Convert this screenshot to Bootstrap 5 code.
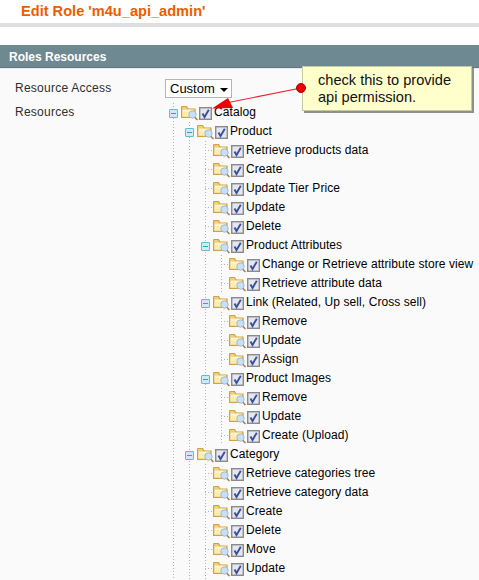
<!DOCTYPE html>
<html lang="en"><head><meta charset="utf-8"><title>Edit Role</title>
<link href="https://cdn.jsdelivr.net/npm/bootstrap@5.3.0/dist/css/bootstrap.min.css" rel="stylesheet">
<style>
html,body{height:580px;overflow:hidden}
body{font-family:"Liberation Sans",Arial,sans-serif;font-size:12px;color:#2f2f2f;background:#fff;position:relative}
.role-title{font-size:14.6px;font-weight:700;color:#eb5e00;margin:0;padding:2px 0 0 21px;height:23px;line-height:18px}
.title-rule{height:4px;background:#dedede}
.sect-head{margin-top:18px;height:22px;background:#6f8992;color:#fff;font-weight:700;font-size:12px;line-height:24px;padding-left:9px;border-bottom:1px solid #5f7983;box-sizing:content-box}
.sect-body{background:#fafafa;height:512px;border-top:1px solid #e8ecee;overflow:hidden}
.form-line-a{margin-top:10px}
.form-line-b{margin-top:5px}
.lbl{width:165px;flex:none;padding-left:15px;letter-spacing:.25px}
.pick{width:67px;height:19px;background:#fff;border:1px solid #b5b5b5;font-size:13px;color:#000;padding:0 0 0 4px}
.caret-tri{width:0;height:0;border-left:4px solid transparent;border-right:4px solid transparent;border-top:4px solid #000;margin:2px 3px 0 0}
.t-row{height:19px;color:#000;white-space:nowrap;letter-spacing:.08px}
.t-cell{width:16px;height:19px;flex:none;display:flex;align-items:center;position:relative}
.t-leaf{background:repeating-linear-gradient(to right,#b4b4b4 0 1px,transparent 1px 3px) no-repeat 8px 9px/8px 1px}
.t-box{width:9px;height:9px;margin-left:4px;margin-top:2px;background:#cfeaf2;border:1px solid #5cbdd4;border-radius:1px;display:flex;align-items:center;justify-content:center}
.t-box::after{content:"";width:5px;height:1px;background:#3f9db5}
.ico-f{width:18px;height:16px;flex:none;margin-top:2px}
.ico-c{width:13px;height:13px;flex:none;margin:4px 2px 0 0}
.t-guide{background:repeating-linear-gradient(to bottom,#b4b4b4 0 1px,transparent 1px 3px) no-repeat 8px 0/1px 100%}
.t-kids{margin-left:16px}
.note-box{position:absolute;left:302px;top:66px;width:170px;height:45px;background:#ffffcc;border:1px solid #c9c9a0;box-shadow:2px 2px 0 #8f8f8f;font-size:14.6px;line-height:17px;color:#111;padding:5px 0 0 15px}
.note-arrow{position:absolute;left:0;top:0;pointer-events:none}
</style></head><body>
<svg width="0" height="0" class="position-absolute"><defs>
<symbol id="fld" viewBox="0 0 18 16"><path d="M.5 2V12.500H14V4H7L5.500 1.500H1Z" fill="#f0cf7c" stroke="#d69f3f" stroke-width="1.200"/><path d="M1.500 4.500H13V11.500H1.500Z" fill="#fdedb4"/><path d="M2 6H11" stroke="#fffbe8"/><circle cx="11.500" cy="9.500" r="3.700" fill="#c9e0f4" stroke="#9bbbd6"/><path d="M14 12.500L16.500 15" stroke="#b8763a" stroke-width="1.500"/></symbol>
<symbol id="chk" viewBox="0 0 13 13"><rect x=".7" y=".7" width="11.600" height="11.600" fill="#e4e7f0" stroke="#8a8a8a" stroke-width="1.400"/><path d="M3.500 6.500L5.500 10L9.800 2.800" fill="none" stroke="#3b4f9a" stroke-width="1.900"/></symbol>
</defs></svg>
<h1 class="role-title">Edit Role 'm4u_api_admin'</h1>
<div class="title-rule"></div>
<div class="sect-head">Roles Resources</div>
<div class="sect-body">
 <div class="d-flex form-line-a align-items-start">
  <div class="lbl">Resource Access</div>
  <div class="pick d-flex align-items-center justify-content-between"><span>Custom</span><span class="caret-tri"></span></div>
 </div>
 <div class="d-flex form-line-b">
  <div class="lbl">Resources</div>
  <div class="t-guide flex-grow-1">
<div class="t-row d-flex"><span class="t-cell"><span class="t-box"></span></span><svg class="ico-f"><use href="#fld"/></svg><svg class="ico-c"><use href="#chk"/></svg><span>Catalog</span></div>
<div class="t-kids t-guide">
 <div class="t-row d-flex"><span class="t-cell"><span class="t-box"></span></span><svg class="ico-f"><use href="#fld"/></svg><svg class="ico-c"><use href="#chk"/></svg><span>Product</span></div>
 <div class="t-kids t-guide">
  <div class="t-row d-flex"><span class="t-cell t-leaf"></span><svg class="ico-f"><use href="#fld"/></svg><svg class="ico-c"><use href="#chk"/></svg><span>Retrieve products data</span></div>
  <div class="t-row d-flex"><span class="t-cell t-leaf"></span><svg class="ico-f"><use href="#fld"/></svg><svg class="ico-c"><use href="#chk"/></svg><span>Create</span></div>
  <div class="t-row d-flex"><span class="t-cell t-leaf"></span><svg class="ico-f"><use href="#fld"/></svg><svg class="ico-c"><use href="#chk"/></svg><span>Update Tier Price</span></div>
  <div class="t-row d-flex"><span class="t-cell t-leaf"></span><svg class="ico-f"><use href="#fld"/></svg><svg class="ico-c"><use href="#chk"/></svg><span>Update</span></div>
  <div class="t-row d-flex"><span class="t-cell t-leaf"></span><svg class="ico-f"><use href="#fld"/></svg><svg class="ico-c"><use href="#chk"/></svg><span>Delete</span></div>
  <div class="t-row d-flex"><span class="t-cell"><span class="t-box"></span></span><svg class="ico-f"><use href="#fld"/></svg><svg class="ico-c"><use href="#chk"/></svg><span>Product Attributes</span></div>
  <div class="t-kids t-guide">
   <div class="t-row d-flex"><span class="t-cell t-leaf"></span><svg class="ico-f"><use href="#fld"/></svg><svg class="ico-c"><use href="#chk"/></svg><span>Change or Retrieve attribute store view</span></div>
   <div class="t-row d-flex"><span class="t-cell t-leaf"></span><svg class="ico-f"><use href="#fld"/></svg><svg class="ico-c"><use href="#chk"/></svg><span>Retrieve attribute data</span></div>
  </div>
  <div class="t-row d-flex"><span class="t-cell"><span class="t-box"></span></span><svg class="ico-f"><use href="#fld"/></svg><svg class="ico-c"><use href="#chk"/></svg><span>Link (Related, Up sell, Cross sell)</span></div>
  <div class="t-kids t-guide">
   <div class="t-row d-flex"><span class="t-cell t-leaf"></span><svg class="ico-f"><use href="#fld"/></svg><svg class="ico-c"><use href="#chk"/></svg><span>Remove</span></div>
   <div class="t-row d-flex"><span class="t-cell t-leaf"></span><svg class="ico-f"><use href="#fld"/></svg><svg class="ico-c"><use href="#chk"/></svg><span>Update</span></div>
   <div class="t-row d-flex"><span class="t-cell t-leaf"></span><svg class="ico-f"><use href="#fld"/></svg><svg class="ico-c"><use href="#chk"/></svg><span>Assign</span></div>
  </div>
  <div class="t-row d-flex"><span class="t-cell"><span class="t-box"></span></span><svg class="ico-f"><use href="#fld"/></svg><svg class="ico-c"><use href="#chk"/></svg><span>Product Images</span></div>
  <div class="t-kids t-guide">
   <div class="t-row d-flex"><span class="t-cell t-leaf"></span><svg class="ico-f"><use href="#fld"/></svg><svg class="ico-c"><use href="#chk"/></svg><span>Remove</span></div>
   <div class="t-row d-flex"><span class="t-cell t-leaf"></span><svg class="ico-f"><use href="#fld"/></svg><svg class="ico-c"><use href="#chk"/></svg><span>Update</span></div>
   <div class="t-row d-flex"><span class="t-cell t-leaf"></span><svg class="ico-f"><use href="#fld"/></svg><svg class="ico-c"><use href="#chk"/></svg><span>Create (Upload)</span></div>
  </div>
 </div>
 <div class="t-row d-flex"><span class="t-cell"><span class="t-box"></span></span><svg class="ico-f"><use href="#fld"/></svg><svg class="ico-c"><use href="#chk"/></svg><span>Category</span></div>
 <div class="t-kids t-guide pb-1">
  <div class="t-row d-flex"><span class="t-cell t-leaf"></span><svg class="ico-f"><use href="#fld"/></svg><svg class="ico-c"><use href="#chk"/></svg><span>Retrieve categories tree</span></div>
  <div class="t-row d-flex"><span class="t-cell t-leaf"></span><svg class="ico-f"><use href="#fld"/></svg><svg class="ico-c"><use href="#chk"/></svg><span>Retrieve category data</span></div>
  <div class="t-row d-flex"><span class="t-cell t-leaf"></span><svg class="ico-f"><use href="#fld"/></svg><svg class="ico-c"><use href="#chk"/></svg><span>Create</span></div>
  <div class="t-row d-flex"><span class="t-cell t-leaf"></span><svg class="ico-f"><use href="#fld"/></svg><svg class="ico-c"><use href="#chk"/></svg><span>Delete</span></div>
  <div class="t-row d-flex"><span class="t-cell t-leaf"></span><svg class="ico-f"><use href="#fld"/></svg><svg class="ico-c"><use href="#chk"/></svg><span>Move</span></div>
  <div class="t-row d-flex"><span class="t-cell t-leaf"></span><svg class="ico-f"><use href="#fld"/></svg><svg class="ico-c"><use href="#chk"/></svg><span>Update</span></div>
 </div>
</div>
  </div>
 </div>
</div>
<div class="note-box">check this to provide<br>api permission.</div>
<svg class="note-arrow" width="479" height="580"><path d="M301 88L226 103" stroke="#f0202a" stroke-width="1.200"/><path d="M212 108.500L228 98L233 108Z" fill="#ee0000"/><circle cx="301" cy="88" r="4.500" fill="#ee0000" stroke="#b00000"/></svg>
</body></html>
